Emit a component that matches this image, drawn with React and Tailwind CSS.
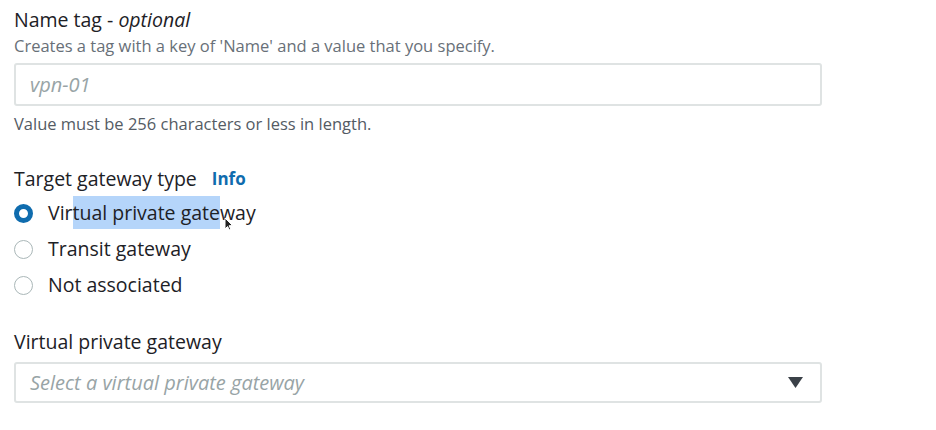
import React from "react";

function Radio({ checked }) {
  return checked ? (
    <span className="inline-block w-[19px] h-[19px] rounded-full border-[5px] border-[#0f6cae] bg-white shrink-0" />
  ) : (
    <span className="inline-block w-[19px] h-[19px] rounded-full border-[1.5px] border-[#aab7b8] bg-white shrink-0" />
  );
}

export default function App() {
  return (
    <div className="w-[936px] h-[430px] bg-white overflow-hidden font-['Open_Sans',sans-serif] font-medium text-[#1d2126]">
      <div className="pl-[14px] pt-[7px] w-[822px]">
        <div className="text-[19.5px] leading-[26px]">
          Name tag - <span className="italic">optional</span>
        </div>
        <div className="mt-[2px] text-[16.5px] leading-[22px] text-[#687078]">
          Creates a tag with a key of 'Name' and a value that you specify.
        </div>
        <div className="mt-[6px] h-[43px] border-2 border-[#dfe3e3] rounded-[3px] flex items-center pl-[14px]">
          <span className="italic font-normal text-[#98a4a6] text-[20px]">vpn-01</span>
        </div>
        <div className="mt-[7px] text-[16.5px] leading-[22px] text-[#545b64]">
          Value must be 256 characters or less in length.
        </div>

        <div className="mt-[31px] flex items-center gap-[15px] text-[19.5px] leading-[26px]">
          <span>Target gateway type</span>
          <span className="text-[#0f6cae] font-bold text-[17px]">Info</span>
        </div>
        <div className="mt-[3px] flex flex-col">
          <div className="h-[36px] flex items-center gap-[15px] text-[19.5px]">
            <Radio checked />
            <span>
              Vir<span className="bg-[#b5d5fa] py-[3px]">tual private gate</span>
              <span className="relative inline-block w-0">
                <svg className="absolute left-[4px] top-[-3px]" width="10" height="14" viewBox="0 0 10 14">
                  <path d="M1 1 L1 12 L3.5 9.5 L5.5 13 L7 12.3 L5 8.8 L8.5 8.5 Z" fill="#222" stroke="#fff" strokeWidth="1" />
                </svg>
              </span>
              way
            </span>
          </div>
          <div className="h-[36px] flex items-center gap-[15px] text-[19.5px]">
            <Radio />
            <span>Transit gateway</span>
          </div>
          <div className="h-[36px] flex items-center gap-[15px] text-[19.5px]">
            <Radio />
            <span>Not associated</span>
          </div>
        </div>

        <div className="mt-[26px] text-[19.5px] leading-[26px]">Virtual private gateway</div>
        <div className="mt-[7px] h-[41px] border-2 border-[#dfe3e3] rounded-[3px] flex items-center justify-between pl-[14px] pr-[17px]">
          <span className="italic font-normal text-[#98a4a6] text-[20px]">Select a virtual private gateway</span>
          <svg width="15" height="11" viewBox="0 0 15 11">
            <path d="M0 0 H15 L7.5 11 Z" fill="#3b4148" />
          </svg>
        </div>
      </div>
    </div>
  );
}
